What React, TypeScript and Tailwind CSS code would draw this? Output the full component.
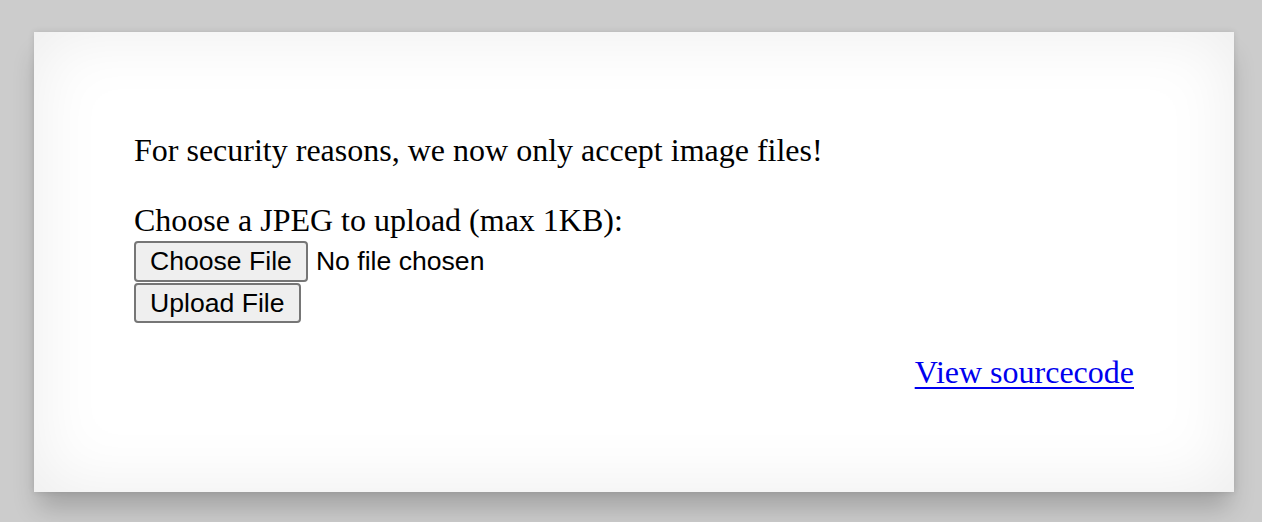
export default function App() {
  return (
    <div className="min-h-[522px] w-full bg-[#cccccc] pt-[32px]">
      <div className="ml-[34px] flex h-[460px] w-[1200px] flex-col bg-white px-[100px] pt-[100px] shadow-[inset_0_0_70px_rgba(0,0,0,0.08),0_20px_24px_-4px_rgba(0,0,0,0.2),0_0_6px_rgba(0,0,0,0.12)]" style={{ fontFamily: '"Liberation Serif", "Times New Roman", serif' }}>
        <div className="text-[32px] leading-[37px] text-black">For security reasons, we now only accept image files!</div>
        <div className="mt-[33px] text-[32px] leading-[37px] text-black">Choose a JPEG to upload (max 1KB):</div>
        <div className="mt-[2px] flex items-center" style={{ fontFamily: '"Liberation Sans", Arial, sans-serif' }}>
          <div className="flex h-[41px] items-center rounded-[4px] border-2 border-[#767676] bg-[#efefef] px-[14px] text-[26.6px] leading-none text-black">Choose File</div>
          <div className="ml-[8px] text-[26.6px] leading-none text-black">No file chosen</div>
        </div>
        <div className="mt-[1px] flex" style={{ fontFamily: '"Liberation Sans", Arial, sans-serif' }}>
          <div className="flex h-[40px] items-center rounded-[4px] border-2 border-[#767676] bg-[#efefef] px-[14px] text-[26.6px] leading-none text-black">Upload File</div>
        </div>
        <div className="mt-[31px] flex justify-end">
          <a href="#" className="text-[32px] leading-[37px] text-[#0000ee] underline decoration-[2px] underline-offset-[4px]">View sourcecode</a>
        </div>
      </div>
    </div>
  );
}
